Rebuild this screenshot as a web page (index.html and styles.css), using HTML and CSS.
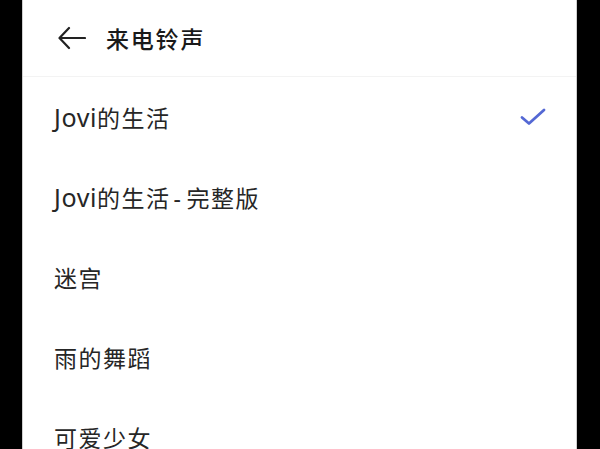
FILE: index.html
```html
<!DOCTYPE html>
<html lang="zh">
<head>
<meta charset="utf-8">
<link rel="stylesheet" href="styles.css">
</head>
<body>
<div class="screen">
  <div class="panel">
    <header class="header">
      <svg class="back" width="28" height="24" viewBox="0 0 28 24">
        <path d="M27 12H2M11 2L1.5 12L11 22" fill="none" stroke="#222" stroke-width="2.2" stroke-linecap="round" stroke-linejoin="round"/>
      </svg>
      <h1 class="title">来电铃声</h1>
    </header>
    <ul class="list">
      <li class="item"><span><span class="latin">Jovi</span>的生活</span>
        <svg class="check" width="26" height="19" viewBox="0 0 26 19">
          <path d="M2 10.5L9 16.5L24 3" fill="none" stroke="#5468d4" stroke-width="2.8" stroke-linecap="round" stroke-linejoin="round"/>
        </svg>
      </li>
      <li class="item"><span><span class="latin">Jovi</span>的生活<span class="dash">-</span>完整版</span></li>
      <li class="item"><span>迷宫</span></li>
      <li class="item"><span>雨的舞蹈</span></li>
      <li class="item"><span>可爱少女</span></li>
    </ul>
  </div>
</div>
</body>
</html>
```
FILE: styles.css
```css
html, body {
  margin: 0;
  padding: 0;
  background: #000;
  height: 449px;
  overflow: hidden;
}
.screen {
  display: flex;
  height: 449px;
}
.panel {
  margin-left: 22px;
  width: 555px;
  height: 449px;
  background: #fff;
  overflow: hidden;
  font-family: "Noto Sans", "Noto Sans CJK SC", sans-serif;
  color: #222;
  border-left: 1px solid #cfcfcf;
  border-right: 1px solid #cfcfcf;
  box-sizing: border-box;
}
.header {
  height: 77px;
  display: flex;
  align-items: center;
  padding-left: 35px;
  border-bottom: 1px solid #f3f3f3;
  box-sizing: border-box;
  padding-bottom: 1px;
}
.back {
  display: block;
  flex: none;
}
.title {
  margin: 0 0 0 20px;
  font-size: 23px;
  font-weight: 500;
  letter-spacing: 1.8px;
  color: #1a1a1a;
}
.list {
  list-style: none;
  margin: 0;
  padding: 0;
}
.item {
  height: 80px;
  display: flex;
  align-items: center;
  justify-content: space-between;
  padding: 0 30px 0 31px;
  font-size: 23px;
  letter-spacing: 1.5px;
  color: #262626;
  box-sizing: border-box;
}
.latin {
  font-size: 25px;
  letter-spacing: 0.6px;
}
.dash {
  padding: 0 4px 0 3px;
}
.check {
  display: block;
  margin-top: -2px;
}
```
